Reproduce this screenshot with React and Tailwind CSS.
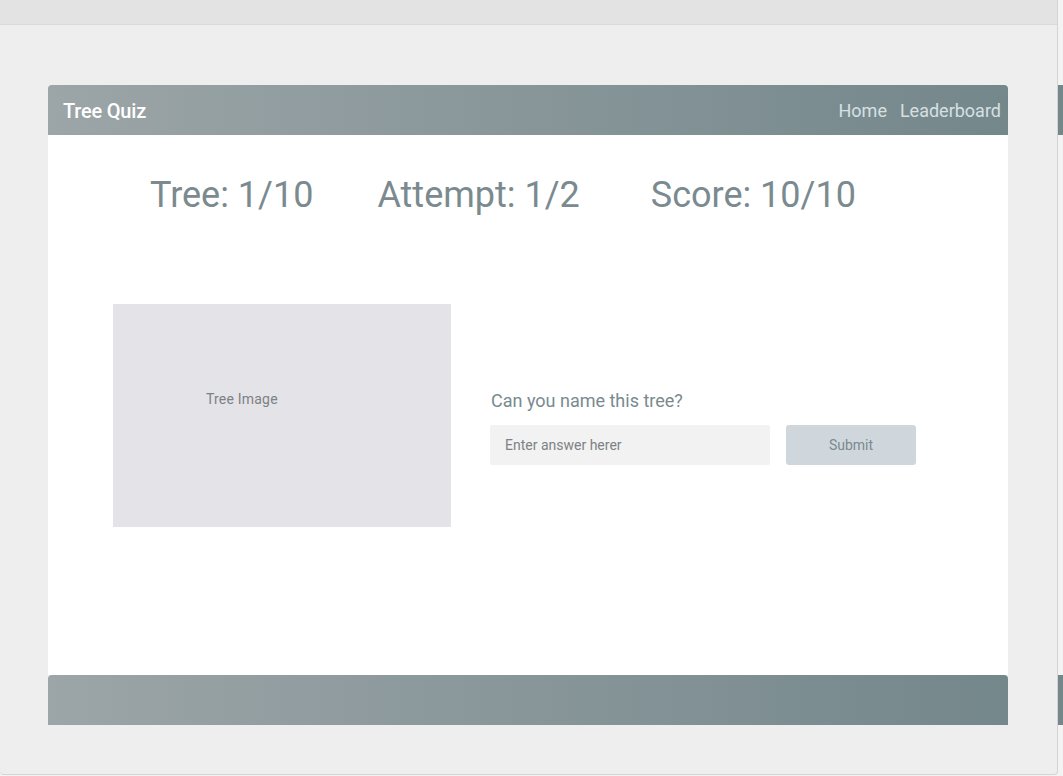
export default function App() {
  const font = { fontFamily: "Roboto, 'Liberation Sans', sans-serif" };
  return (
    <div className="w-[1063px] h-[776px] bg-[#f3f3f3] flex overflow-hidden" style={font}>
      <div className="w-[1058px] h-[775px] shrink-0 border-r border-b border-[#d4d4d4] rounded-b-[4px] bg-[#eeeeee] flex flex-col">
        <div className="h-[25px] shrink-0 bg-[#e3e3e3] border-b border-[#d9d9d9]" />
        <div className="pl-[48px] pt-[60px]">
          <div className="w-[960px] flex flex-col">
            <div className="h-[50px] rounded-t-[4px] bg-gradient-to-r from-[#9ca5a8] to-[#74878b] flex items-center justify-between pl-[15px] pr-[7px] pt-[1px]">
              <span className="text-white text-[20px] font-medium tracking-[-0.2px]">Tree Quiz</span>
              <div className="flex items-center gap-[13px] text-[18px] text-[#d6e0e3]">
                <span>Home</span>
                <span>Leaderboard</span>
              </div>
            </div>
            <div className="h-[540px] bg-white flex flex-col">
              <div className="flex pl-[102px] pt-[36px] text-[36px] leading-[48px] text-[#7a8a8f]">
                <span>Tree: 1/10</span>
                <span className="ml-[64px]">Attempt: 1/2</span>
                <span className="ml-[71px]">Score: 10/10</span>
              </div>
              <div className="flex items-start pl-[65px] mt-[85px]">
                <div className="w-[338px] h-[223px] bg-[#e4e4e8] pl-[93px] pt-[85px] text-[14px] leading-[20px] text-[#7b8184] tracking-[0.2px]">
                  Tree Image
                </div>
                <div className="ml-[39px] mt-[85px] flex flex-col">
                  <div className="pl-[1px] text-[18px] leading-[24px] text-[#7a8a8f]">Can you name this tree?</div>
                  <div className="flex mt-[12px] gap-[16px]">
                    <input
                      className="w-[280px] h-[40px] bg-[#f2f2f2] rounded-[2px] px-[15px] text-[14px] text-[#7d8285] placeholder:text-[#7d8285] outline-none"
                      placeholder="Enter answer herer"
                      style={font}
                    />
                    <button
                      className="w-[130px] h-[40px] bg-[#d0d7dc] rounded-[3px] text-[14px] text-[#7a8a8f]"
                      style={font}
                    >
                      Submit
                    </button>
                  </div>
                </div>
              </div>
            </div>
            <div className="h-[50px] rounded-t-[4px] bg-gradient-to-r from-[#9ca5a8] to-[#74878b]" />
          </div>
        </div>
      </div>
      <div className="flex-1 flex flex-col pt-[85px]">
        <div className="h-[50px] bg-[#74878b]" />
        <div className="h-[540px]" />
        <div className="h-[50px] bg-[#74878b]" />
      </div>
    </div>
  );
}
